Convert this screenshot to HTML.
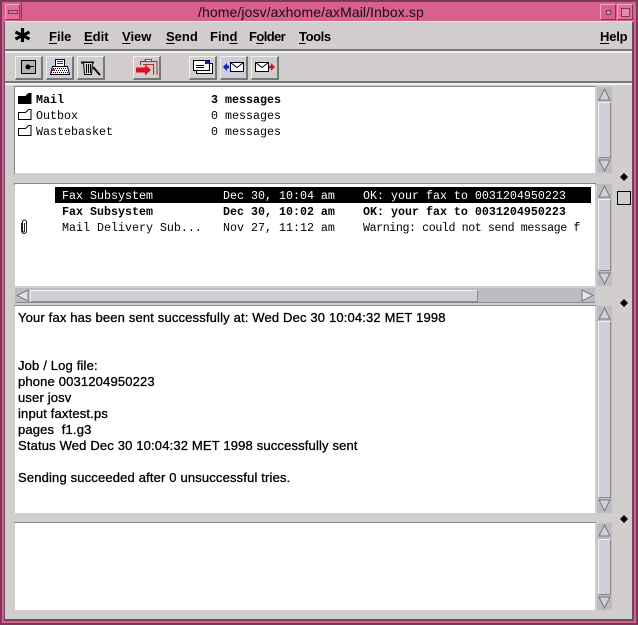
<!DOCTYPE html>
<html><head><meta charset="utf-8"><style>
html,body{margin:0;padding:0;width:638px;height:625px;overflow:hidden;background:#cfcfd6}
div,span,svg{position:absolute;box-sizing:border-box}
.t{white-space:pre;line-height:16px}
.m{font:11.67px "Liberation Mono",monospace;color:#000}
.b{font-weight:bold}
.menu{font:bold 13px "Liberation Sans",sans-serif;color:#000;top:28px;line-height:17px;white-space:pre}
.menu u{text-decoration:underline;text-underline-offset:2px}
.pane{background:#fff;left:15px;width:580px}
.bg{background:repeating-conic-gradient(#d6d3d2 0 25%,#c6c8d8 0 50%) 0 0/2px 2px}
.btn{top:56px;width:28px;height:24px;background:repeating-conic-gradient(#d6d3d2 0 25%,#c6c8d8 0 50%) 0 0/2px 2px;border-top:1px solid #f0f0f0;border-left:1px solid #f0f0f0;border-right:2px solid #777;border-bottom:2px solid #777}
.msg{font:13px "Liberation Sans",sans-serif;letter-spacing:.16px;-webkit-text-stroke:.3px #000;color:#000;left:18px;line-height:16px;white-space:pre}
.sb{left:597px;width:15px;background:#bcbcc4}
.thumb{position:absolute;left:1px;width:13px;background:#cfcfd6;border:1px solid #8a8a90;border-top-color:#f2f2f2;border-left-color:#f2f2f2}
.dia{left:619px;width:10px;height:10px}
</style></head><body>
<!-- window frame -->
<div style="left:0;top:0;width:638px;height:625px;background:#d8608c"></div>
<div style="left:0;top:0;width:638px;height:2px;background:#7b3a5c"></div>
<div style="left:0;top:0;width:2px;height:625px;background:#7b3a5c"></div>
<div style="right:0;top:0;width:2px;height:625px;background:#7b3a5c"></div>
<div style="left:0;bottom:0;width:638px;height:2px;background:#7b3a5c"></div>
<div class="bg" style="left:4px;top:21px;width:630px;height:600px;border:1px solid #6b4a60;border-top:1px solid #f0e4ea;border-bottom-width:2px;border-right-width:2px"></div>
<!-- title bar -->
<div style="left:5px;top:4px;width:15px;height:16px;background:#e4709a;border:1px solid #f3a8c4;border-right-color:#7b3a5c;border-bottom-color:#7b3a5c"></div>
<div style="left:8px;top:10px;width:10px;height:4px;border:1px solid #7b3a5c;background:#e4709a"></div>
<div style="left:21px;top:2px;width:1px;height:19px;background:#7b3a5c"></div>
<div style="left:600px;top:4px;width:16px;height:16px;background:#d8608c;border:1px solid #f3a8c4;border-right-color:#7b3a5c;border-bottom-color:#7b3a5c"></div>
<div style="left:606px;top:10px;width:5px;height:5px;background:#e88aac;border:1px solid #7b3a5c"></div>
<div style="left:617px;top:4px;width:16px;height:16px;background:#e4709a;border:1px solid #f3a8c4;border-right-color:#7b3a5c;border-bottom-color:#7b3a5c"></div>
<div style="left:621px;top:8px;width:9px;height:9px;border:1px solid #7b3a5c;background:#e88aac"></div>
<div style="left:198px;top:4px;font:14px/16px 'Liberation Sans',sans-serif;letter-spacing:.1px;color:#1a0a12;white-space:pre">/home/josv/axhome/axMail/Inbox.sp</div>
<!-- menu -->
<svg style="left:14px;top:27px" width="18" height="17"><path d="M8.500 1v14M1.500 5l14 7M15.500 5l-14 7" stroke="#000" stroke-width="3.200" fill="none"/></svg>
<div class="menu" style="left:49px"><u>F</u>ile</div>
<div class="menu" style="left:84px"><u>E</u>dit</div>
<div class="menu" style="left:122px"><u>V</u>iew</div>
<div class="menu" style="left:166px"><u>S</u>end</div>
<div class="menu" style="left:210px">Fin<u>d</u></div>
<div class="menu" style="left:249px;letter-spacing:-.6px">F<u>o</u>lder</div>
<div class="menu" style="left:299px;letter-spacing:-.4px"><u>T</u>ools</div>
<div class="menu" style="left:600px;letter-spacing:-.2px"><u>H</u>elp</div>
<div style="left:5px;top:49px;width:627px;height:2px;background:#77777c"></div>
<div style="left:5px;top:51px;width:627px;height:2px;background:#f0f0f0"></div>
<div style="left:5px;top:81px;width:627px;height:2px;background:#77777c"></div>
<div style="left:5px;top:83px;width:627px;height:2px;background:#f0f0f0"></div>
<!-- toolbar -->
<div class="btn" style="left:15px"><svg style="left:0;top:0" width="25" height="21"><rect x="5.500" y="3.500" width="14" height="13" fill="#b4b4b4" stroke="#000"/><circle cx="12" cy="10" r="2.500" fill="#000"/><path d="M14 9.500h4" stroke="#000"/></svg></div>
<div class="btn" style="left:46px"><svg style="left:0;top:0" width="25" height="21"><rect x="8.500" y="2.500" width="9" height="7" fill="#fff" stroke="#000"/><path d="M10 4.500h6M10 6.500h6" stroke="#2030c0"/><path d="M5.500 9.500h15l2 8h-19z" fill="#fff" stroke="#000"/><path d="M6 11.500h14M5 13.500h16M4 15.500h18" stroke="#000" stroke-dasharray="1 1"/><rect x="5" y="12" width="3" height="2" fill="#e01030"/></svg></div>
<div class="btn" style="left:77px"><svg style="left:0;top:0" width="25" height="21"><path d="M3 5.500h13" stroke="#000" stroke-width="2"/><path d="M5.500 5.500l1 12h7l1-12z" fill="#d8d8d8" stroke="#000"/><path d="M8.500 7v9M10.500 7v9M12.500 7v9" stroke="#000"/><path d="M15 10l7 8" stroke="#000" stroke-width="2"/></svg></div>
<div class="btn" style="left:133px"><svg style="left:0;top:0" width="25" height="21"><path d="M6.500 8V4.500h4l1-2h5l1 2h5.500v13" fill="none" stroke="#a03030"/><path d="M9.500 8V7.500h10v10" fill="none" stroke="#a03030"/><rect x="11.500" y="2.500" width="6" height="2" fill="#fff" stroke="#a03030"/><path d="M2 10.500h9V7.500l6 5.500-6 5.500v-3H2z" fill="#e01020"/></svg></div>
<div class="btn" style="left:189px"><svg style="left:0;top:0" width="25" height="21"><rect x="6.500" y="6.500" width="16" height="10" fill="#fff" stroke="#000"/><rect x="3.500" y="3.500" width="16" height="10" fill="#fff" stroke="#000"/><rect x="15" y="4" width="4" height="3" fill="#1020c0"/><path d="M6 8.500h8M6 10.500h8" stroke="#000"/></svg></div>
<div class="btn" style="left:220px"><svg style="left:0;top:0" width="25" height="21"><rect x="9.500" y="5.500" width="13" height="9" fill="#fff" stroke="#000"/><path d="M9.500 5.500l6.500 5 6.500-5" fill="none" stroke="#000"/><path d="M2 10l4-4v8z" fill="#1020d0"/><path d="M5 8.500h3v3H5z" fill="#1020d0"/></svg></div>
<div class="btn" style="left:251px"><svg style="left:0;top:0" width="25" height="21"><rect x="3.500" y="5.500" width="13" height="9" fill="#fff" stroke="#000"/><path d="M3.500 5.500l6.500 5 6.500-5" fill="none" stroke="#000"/><path d="M23 10l-4-4v8z" fill="#e01020"/><path d="M17 8.500h3v3h-3z" fill="#e01020"/></svg></div>
<!-- panes -->
<div style="left:14px;top:86px;width:582px;height:88px;border:1px solid #88888e;border-right:none;border-bottom:none"></div>
<div class="pane" style="top:87px;height:86px"></div>
<div style="left:14px;top:183px;width:582px;height:2px;background:#88888e"></div>
<div class="pane" style="top:184px;height:102px"></div>
<div style="left:14px;top:305px;width:582px;height:1px;background:#88888e"></div>
<div class="pane" style="top:306px;height:207px"></div>
<div style="left:14px;top:522px;width:582px;height:1px;background:#88888e"></div>
<div class="pane" style="top:523px;height:87px"></div>
<!-- folder list -->
<svg style="left:18px;top:93px" width="14" height="44"><path d="M.5 3.500h7l3-3h2.500v10H.5z" fill="#000" stroke="#000"/><path d="M.5 19.500h7l3-3h2.500v10H.5z" fill="#fff" stroke="#000"/><path d="M.5 35.500h7l3-3h2.500v10H.5z" fill="#fff" stroke="#000"/></svg>
<div class="t m b" style="left:36px;top:93px">Mail</div>
<div class="t m b" style="left:211px;top:93px">3 messages</div>
<div class="t m" style="left:36px;top:109px">Outbox</div>
<div class="t m" style="left:211px;top:109px">0 messages</div>
<div class="t m" style="left:36px;top:125px">Wastebasket</div>
<div class="t m" style="left:211px;top:125px">0 messages</div>
<!-- message list -->
<div style="left:55px;top:187px;width:536px;height:16px;background:#000"></div>
<div class="t m" style="left:62px;top:189px;color:#fff">Fax Subsystem</div>
<div class="t m" style="left:223px;top:189px;color:#fff">Dec 30, 10:04 am</div>
<div class="t m" style="left:363px;top:189px;color:#fff">OK: your fax to 0031204950223</div>
<div class="t m b" style="left:62px;top:205px">Fax Subsystem</div>
<div class="t m b" style="left:223px;top:205px">Dec 30, 10:02 am</div>
<div class="t m b" style="left:363px;top:205px">OK: your fax to 0031204950223</div>
<div class="t m" style="left:62px;top:221px">Mail Delivery Sub...</div>
<div class="t m" style="left:223px;top:221px">Nov 27, 11:12 am</div>
<div style="left:363px;top:221px;width:217px;height:16px;overflow:hidden"><span class="t m" style="left:0;top:0;letter-spacing:-.42px">Warning: could not send message for</span></div>
<svg style="left:20px;top:219px" width="8" height="17"><path d="M1.500 4v8a2.500 2.500 0 0 0 5 0V3a2 2 0 0 0-4 0v9a1 1 0 0 0 2 0V4" fill="none" stroke="#222" stroke-width="1"/></svg>
<!-- message body -->
<div class="msg" style="top:310px">Your fax has been sent successfully at: Wed Dec 30 10:04:32 MET 1998</div>
<div class="msg" style="top:358px">Job / Log file:</div>
<div class="msg" style="top:374px">phone 0031204950223</div>
<div class="msg" style="top:390px">user josv</div>
<div class="msg" style="top:406px">input faxtest.ps</div>
<div class="msg" style="top:422px">pages  f1.g3</div>
<div class="msg" style="top:438px">Status Wed Dec 30 10:04:32 MET 1998 successfully sent</div>
<div class="msg" style="top:470px">Sending succeeded after 0 unsuccessful tries.</div>
<!-- vertical scrollbars -->
<div class="sb" style="top:87px;height:86px"><div class="thumb" style="top:15px;height:56px"></div><svg style="left:0;top:0" width="15" height="86"><path d="M2 13L7.500 2 13 13z" fill="#d0d0d6" stroke="#77777c"/><path d="M2 73l5.500 11L13 73z" fill="#d0d0d6" stroke="#77777c"/></svg></div>
<div class="sb" style="top:184px;height:102px"><div class="thumb" style="top:15px;height:72px"></div><svg style="left:0;top:0" width="15" height="102"><path d="M2 13L7.500 2 13 13z" fill="#d0d0d6" stroke="#77777c"/><path d="M2 89l5.500 11L13 89z" fill="#d0d0d6" stroke="#77777c"/></svg></div>
<div class="sb" style="top:306px;height:207px"><div class="thumb" style="top:15px;height:177px"></div><svg style="left:0;top:0" width="15" height="207"><path d="M2 13L7.500 2 13 13z" fill="#d0d0d6" stroke="#77777c"/><path d="M2 194l5.500 11L13 194z" fill="#d0d0d6" stroke="#77777c"/></svg></div>
<div class="sb" style="top:523px;height:87px"><div class="thumb" style="top:16px;height:56px"></div><svg style="left:0;top:0" width="15" height="87"><path d="M2 13L7.500 2 13 13z" fill="#d0d0d6" stroke="#77777c"/><path d="M2 74l5.500 11L13 74z" fill="#d0d0d6" stroke="#77777c"/></svg></div>
<!-- horizontal scrollbar -->
<div style="left:15px;top:288px;width:580px;height:15px;background:#bcbcc4;border-bottom:1px solid #88888e"></div>
<div style="left:30px;top:290px;width:448px;height:12px;background:#cfcfd6;border:1px solid #8a8a90;border-top-color:#f2f2f2;border-left-color:#f2f2f2"></div>
<svg style="left:15px;top:288px" width="580" height="15"><path d="M13 2L2 7.500 13 13z" fill="#e4e4ea" stroke="#77777c"/><path d="M567 2l11 5.500L567 13z" fill="#e4e4ea" stroke="#77777c"/></svg>
<!-- sash controls -->
<svg class="dia" style="top:172px"><path d="M5 1l4 4-4 4-4-4z" fill="#000"/></svg>
<svg class="dia" style="top:298px"><path d="M5 1l4 4-4 4-4-4z" fill="#000"/></svg>
<svg class="dia" style="top:514px"><path d="M5 1l4 4-4 4-4-4z" fill="#000"/></svg>
<div style="left:617px;top:191px;width:14px;height:14px;border:1px solid #000"></div>
</body></html>
